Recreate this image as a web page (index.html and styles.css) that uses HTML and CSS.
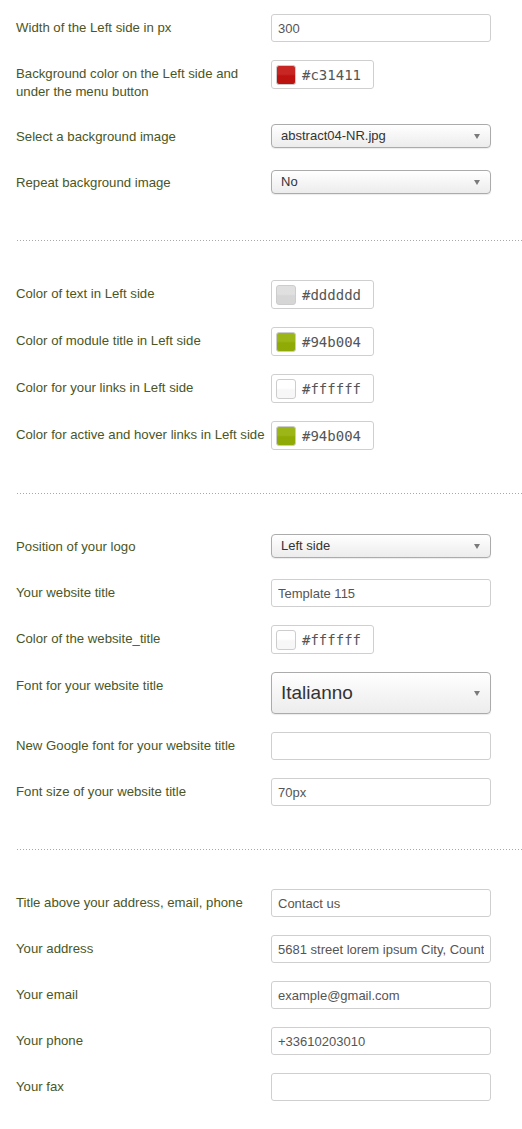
FILE: index.html
```html
<!DOCTYPE html>
<html lang="en">
<head>
    <meta charset="UTF-8">
    <meta name="viewport" content="width=device-width, initial-scale=1.0">
    <title>Template Options</title>
    <link rel="stylesheet" href="styles.css">
</head>
<body>
    <div class="options">
        <div class="row">
            <label class="label">Width of the Left side in px</label>
            <div class="control"><input class="text" type="text" value="300"></div>
        </div>
        <div class="row">
            <label class="label">Background color on the Left side and under the menu button</label>
            <div class="control"><div class="color"><span class="swatch" style="background-color: #c31411"></span>#c31411</div></div>
        </div>
        <div class="row">
            <label class="label">Select a background image</label>
            <div class="control"><div class="select">abstract04-NR.jpg</div></div>
        </div>
        <div class="row">
            <label class="label">Repeat background image</label>
            <div class="control"><div class="select">No</div></div>
        </div>

        <div class="separator"></div>

        <div class="row">
            <label class="label">Color of text in Left side</label>
            <div class="control"><div class="color"><span class="swatch" style="background-color: #dddddd"></span>#dddddd</div></div>
        </div>
        <div class="row">
            <label class="label">Color of module title in Left side</label>
            <div class="control"><div class="color"><span class="swatch" style="background-color: #94b004"></span>#94b004</div></div>
        </div>
        <div class="row">
            <label class="label">Color for your links in Left side</label>
            <div class="control"><div class="color"><span class="swatch" style="background-color: #ffffff"></span>#ffffff</div></div>
        </div>
        <div class="row">
            <label class="label">Color for active and hover links in Left side</label>
            <div class="control"><div class="color"><span class="swatch" style="background-color: #94b004"></span>#94b004</div></div>
        </div>

        <div class="separator"></div>

        <div class="row">
            <label class="label">Position of your logo</label>
            <div class="control"><div class="select">Left side</div></div>
        </div>
        <div class="row">
            <label class="label">Your website title</label>
            <div class="control"><input class="text" type="text" value="Template 115"></div>
        </div>
        <div class="row">
            <label class="label">Color of the website_title</label>
            <div class="control"><div class="color"><span class="swatch" style="background-color: #ffffff"></span>#ffffff</div></div>
        </div>
        <div class="row">
            <label class="label">Font for your website title</label>
            <div class="control"><div class="select large">Italianno</div></div>
        </div>
        <div class="row">
            <label class="label">New Google font for your website title</label>
            <div class="control"><input class="text" type="text" value=""></div>
        </div>
        <div class="row">
            <label class="label">Font size of your website title</label>
            <div class="control"><input class="text" type="text" value="70px"></div>
        </div>

        <div class="separator"></div>

        <div class="row">
            <label class="label">Title above your address, email, phone</label>
            <div class="control"><input class="text" type="text" value="Contact us"></div>
        </div>
        <div class="row">
            <label class="label">Your address</label>
            <div class="control"><input class="text" type="text" value="5681 street lorem ipsum City, Country"></div>
        </div>
        <div class="row">
            <label class="label">Your email</label>
            <div class="control"><input class="text" type="text" value="example@gmail.com"></div>
        </div>
        <div class="row">
            <label class="label">Your phone</label>
            <div class="control"><input class="text" type="text" value="+33610203010"></div>
        </div>
        <div class="row">
            <label class="label">Your fax</label>
            <div class="control"><input class="text" type="text" value=""></div>
        </div>
    </div>
</body>
</html>
```

FILE: styles.css
```css
body {
    margin: 0;
    background: #fff;
    font-family: 'Liberation Sans', Arial, sans-serif;
    font-size: 13px;
    color: #4a5624;
}

.options {
    padding: 14px 0 20px 16px;
}

.row {
    display: flex;
    align-items: flex-start;
    margin-bottom: 18px;
}

.label {
    width: 255px;
    flex-shrink: 0;
    padding: 5px 0 4px;
    line-height: 18px;
    font-size: 13.2px;
    color: #4a5624;
}

.control {
    min-height: 28px;
    display: flex;
    align-items: center;
}

.text {
    width: 220px;
    height: 28px;
    box-sizing: border-box;
    margin: 0;
    padding: 0 6px;
    border: 1px solid #cfcfcf;
    border-radius: 3px;
    font-family: 'Liberation Sans', Arial, sans-serif;
    font-size: 13px;
    color: #555;
    background: #fff;
    outline: none;
}

.color {
    width: 103px;
    height: 29px;
    box-sizing: border-box;
    display: flex;
    align-items: center;
    gap: 6px;
    padding-left: 4px;
    border: 1px solid #cfcfcf;
    border-radius: 3px;
    font-family: 'DejaVu Sans Mono', monospace;
    font-size: 14px;
    color: #555;
}

.swatch {
    width: 20px;
    height: 20px;
    box-sizing: border-box;
    border: 1px solid #cdcdcd;
    border-radius: 3px;
    background-image: linear-gradient(rgba(255, 255, 255, 0.08) 45%, rgba(0, 0, 0, 0.03) 55%);
}

.select {
    position: relative;
    width: 220px;
    height: 24px;
    box-sizing: border-box;
    margin: 1px 0 3px;
    padding: 0 24px 0 9px;
    line-height: 22px;
    border: 1px solid #ababab;
    border-radius: 4px;
    background: linear-gradient(#ffffff, #ececec);
    box-shadow: 0 1px 1px rgba(0, 0, 0, 0.08);
    color: #333;
    white-space: nowrap;
    overflow: hidden;
}

.select::after {
    content: '';
    position: absolute;
    right: 10px;
    top: 9px;
    border-left: 3.5px solid transparent;
    border-right: 3.5px solid transparent;
    border-top: 5px solid #7a7a7a;
}

.select.large {
    height: 42px;
    margin: 0;
    line-height: 40px;
    font-size: 19px;
}

.select.large::after {
    top: 18px;
}

.separator {
    height: 1px;
    margin: 43px 0 39px 1px;
    background-image: linear-gradient(to right, #a8a8a8 1px, transparent 1px);
    background-size: 3px 1px;
}
```
